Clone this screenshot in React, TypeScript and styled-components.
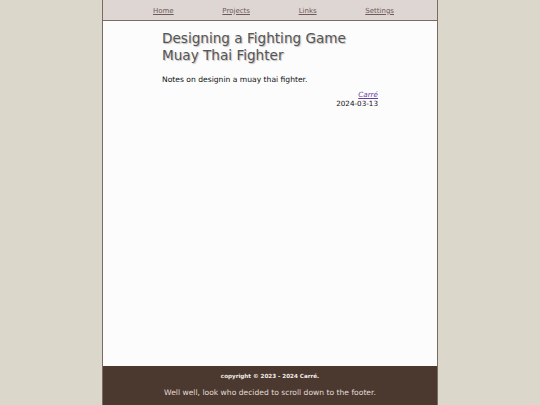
import React from "react";
import styled, { createGlobalStyle } from "styled-components";

const Global = createGlobalStyle`
  html, body { margin: 0; padding: 0; height: 100%; }
  body {
    background: #dbd7cb;
    font-family: "DejaVu Sans", sans-serif;
  }
  #root { height: 100%; }
`;

const Page = styled.div`
  width: 334px;
  margin: 0 auto;
  height: 405px;
  display: flex;
  flex-direction: column;
  border-left: 1px solid #7b6b63;
  border-right: 1px solid #7b6b63;
  background: #fcfcfc;
  box-sizing: content-box;
`;

const Nav = styled.nav`
  height: 19px;
  background: #ddd6d2;
  border-bottom: 1px solid #7b6b63;
  display: flex;
  justify-content: space-between;
  align-items: center;
  padding: 1px 43px 0 50px;
`;

const NavLink = styled.a`
  font-size: 7px;
  color: #6e5a5c;
  text-decoration: underline;
`;

const Main = styled.main`
  flex: 1;
  padding: 9px 59px 0;
`;

const Title = styled.h1`
  margin: 0;
  font-size: 13.6px;
  font-weight: normal;
  line-height: 17px;
  color: #555;
  text-shadow: 1px 1px 1px #bdbdbd;
`;

const Summary = styled.p`
  margin: 11px 0 0;
  font-size: 7.6px;
  color: #111;
`;

const Meta = styled.div`
  margin-top: 7px;
  display: flex;
  flex-direction: column;
  align-items: flex-end;
  font-size: 7.2px;
  line-height: 8.5px;
  color: #111;
`;

const Author = styled.a`
  color: #6a3aa8;
  font-style: italic;
  text-decoration: underline;
`;

const Footer = styled.footer`
  height: 39px;
  background: #4b3930;
  display: flex;
  flex-direction: column;
  align-items: center;
  padding-top: 7px;
  box-sizing: border-box;
`;

const Copy = styled.div`
  font-size: 5.6px;
  font-weight: bold;
  color: #f2ede8;
`;

const Tagline = styled.div`
  margin-top: 9px;
  font-size: 7.6px;
  color: #e2dbd4;
`;

export default function App() {
  return (
    <>
      <Global />
      <Page>
        <Nav>
          <NavLink href="#">Home</NavLink>
          <NavLink href="#">Projects</NavLink>
          <NavLink href="#">Links</NavLink>
          <NavLink href="#">Settings</NavLink>
        </Nav>
        <Main>
          <Title>
            Designing a Fighting Game
            <br />
            Muay Thai Fighter
          </Title>
          <Summary>Notes on designin a muay thai fighter.</Summary>
          <Meta>
            <Author href="#">Carré</Author>
            <span>2024-03-13</span>
          </Meta>
        </Main>
        <Footer>
          <Copy>copyright © 2023 - 2024 Carré.</Copy>
          <Tagline>Well well, look who decided to scroll down to the footer.</Tagline>
        </Footer>
      </Page>
    </>
  );
}
